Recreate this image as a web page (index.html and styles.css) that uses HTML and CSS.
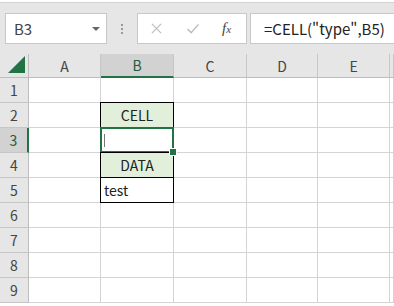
FILE: index.html
```html
<!DOCTYPE html>
<html lang="ja">
<head>
    <meta charset="UTF-8">
    <title>CELL</title>
    <link rel="stylesheet" href="styles.css">
</head>
<body>
<div class="toolbar">
    <div class="name-box">
        <span>B3</span>
        <svg class="drop" viewBox="0 0 8 4"><path d="M0 0h8L4 4z" fill="#666"/></svg>
    </div>
    <div class="grip"><i></i><i></i><i></i></div>
    <div class="btns">
        <svg class="btn" viewBox="0 0 12 12"><path d="M1 1l10 10M11 1L1 11" stroke="#bdbdbd" stroke-width="1.3" fill="none"/></svg>
        <svg class="btn" viewBox="0 0 14 12"><path d="M1 6.5l4 4L13 1.5" stroke="#bdbdbd" stroke-width="1.6" fill="none"/></svg>
        <span class="fx">f<small>x</small></span>
    </div>
    <div class="formula">=CELL("type",B5)</div>
</div>

<div class="sheet">
    <div class="corner"><svg viewBox="0 0 18 18"><path d="M18 0v18H0z" fill="#217346"/></svg></div>
    <div class="col">A</div>
    <div class="col sel">B</div>
    <div class="col">C</div>
    <div class="col">D</div>
    <div class="col">E</div>
    <div class="col"></div>

    <div class="row">1</div><div class="c"></div><div class="c"></div><div class="c"></div><div class="c"></div><div class="c"></div><div class="c"></div>
    <div class="row">2</div><div class="c"></div><div class="c box head">CELL</div><div class="c"></div><div class="c"></div><div class="c"></div><div class="c"></div>
    <div class="row sel">3</div><div class="c"></div><div class="c box active"><span class="caret"></span></div><div class="c"></div><div class="c"></div><div class="c"></div><div class="c"></div>
    <div class="row">4</div><div class="c"></div><div class="c box head">DATA</div><div class="c"></div><div class="c"></div><div class="c"></div><div class="c"></div>
    <div class="row">5</div><div class="c"></div><div class="c box">test</div><div class="c"></div><div class="c"></div><div class="c"></div><div class="c"></div>
    <div class="row">6</div><div class="c"></div><div class="c"></div><div class="c"></div><div class="c"></div><div class="c"></div><div class="c"></div>
    <div class="row">7</div><div class="c"></div><div class="c"></div><div class="c"></div><div class="c"></div><div class="c"></div><div class="c"></div>
    <div class="row">8</div><div class="c"></div><div class="c"></div><div class="c"></div><div class="c"></div><div class="c"></div><div class="c"></div>
    <div class="row">9</div><div class="c"></div><div class="c"></div><div class="c"></div><div class="c"></div><div class="c"></div><div class="c"></div>
</div>
</body>
</html>
```

FILE: styles.css
```css
* {
    box-sizing: border-box;
}
body {
    margin: 0;
    background: #fff;
    font-family: "Noto Sans CJK JP", "Noto Sans", sans-serif;
    color: #222;
    overflow: hidden;
}
.toolbar {
    display: flex;
    align-items: center;
    height: 52px;
    margin-top: 2px;
    padding: 0 0 0 5px;
    background: #e6e6e6;
    border-top: 1px solid #d4d4d4;
}
.name-box {
    display: flex;
    align-items: center;
    justify-content: space-between;
    width: 102px;
    height: 31px;
    padding: 0 6px 0 8px;
    background: #fff;
    border: 1px solid #c8c8c8;
    font-size: 15px;
    color: #444;
}
.drop {
    width: 8px;
    height: 4px;
}
.grip {
    display: flex;
    flex-direction: column;
    gap: 2px;
    margin: 0 14px 0 14px;
}
.grip i {
    width: 2px;
    height: 2px;
    background: #999;
}
.btns {
    display: flex;
    align-items: center;
    width: 110px;
    height: 31px;
    padding-left: 13px;
    background: #fff;
    border: 1px solid #c8c8c8;
}
.btn {
    width: 11px;
    height: 11px;
    margin-right: 24px;
}
.btns .btn + .btn {
    width: 14px;
    margin-right: 22px;
}
.fx {
    font-family: "Liberation Serif", serif;
    font-style: italic;
    font-size: 15px;
    color: #444;
}
.fx small {
    font-size: 11px;
}
.formula {
    flex: 1;
    height: 31px;
    margin-left: 3px;
    padding-left: 13px;
    line-height: 29px;
    background: #fff;
    border: 1px solid #c8c8c8;
    border-right: 0;
    font-size: 15px;
    color: #222;
    white-space: nowrap;
}
.sheet {
    display: grid;
    grid-template-columns: 29px 72px 73px 73px 71px 72px 1fr;
    grid-template-rows: 24px repeat(9, 25px);
    font-size: 14px;
}
.corner {
    display: flex;
    align-items: flex-end;
    padding: 0 0 4px 8px;
    background: #e6e6e6;
    border-right: 1px solid #bdbdbd;
    border-bottom: 1px solid #bdbdbd;
}
.corner svg {
    width: 17px;
    height: 17px;
}
.col {
    display: flex;
    align-items: center;
    justify-content: center;
    background: #e6e6e6;
    border-right: 1px solid #c6c6c6;
    border-bottom: 1px solid #bdbdbd;
    color: #444;
}
.col.sel {
    background: #d2d2d2;
    border-bottom: 2px solid #217346;
    color: #1e5c38;
}
.row {
    display: flex;
    align-items: center;
    justify-content: center;
    background: #e6e6e6;
    border-right: 1px solid #bdbdbd;
    border-bottom: 1px solid #c6c6c6;
    color: #444;
}
.row.sel {
    background: #d2d2d2;
    border-right: 2px solid #217346;
    color: #1e5c38;
}
.c {
    position: relative;
    display: flex;
    align-items: center;
    padding-left: 3px;
    border-right: 1px solid #d4d4d4;
    border-bottom: 1px solid #d4d4d4;
}
.box::after {
    content: "";
    position: absolute;
    top: -1px;
    left: -1px;
    right: -1px;
    bottom: -1px;
    border: 1px solid #000;
}
.head {
    justify-content: center;
    padding-left: 0;
    background: #e2efda;
}
.active::after {
    border: 2px solid #217346;
}
.active::before {
    content: "";
    position: absolute;
    right: -4px;
    bottom: -4px;
    z-index: 1;
    width: 6px;
    height: 6px;
    background: #217346;
    border: 1px solid #fff;
}
.caret {
    width: 1px;
    height: 13px;
    background: #777;
}
```
